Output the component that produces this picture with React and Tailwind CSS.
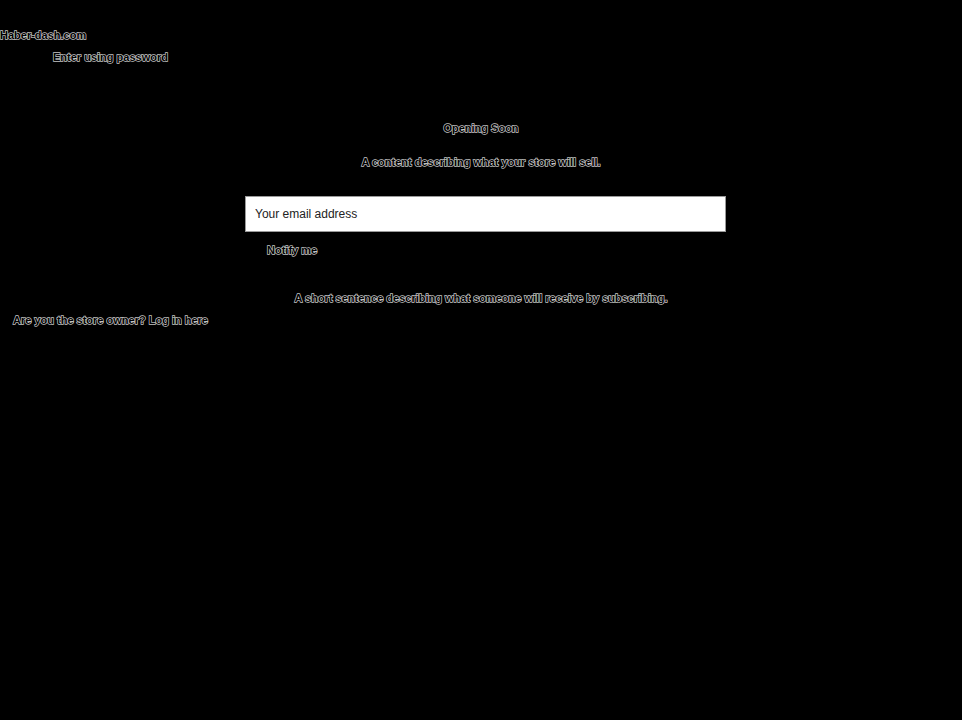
import React from "react";

const outline =
  "text-black font-bold text-[11px] [-webkit-text-stroke:1.4px_#c4c4c4] [paint-order:stroke_fill]";

export default function App() {
  return (
    <div className="min-h-[720px] w-full bg-black font-['Liberation_Sans',Arial,sans-serif]">
      {/* header */}
      <div className="pt-[28px]">
        <div className={outline + " leading-[14px]"}>Haber-dash.com</div>
        <div className={outline + " leading-[14px] mt-[8px] ml-[53px]"}>Enter using password</div>
      </div>

      {/* main */}
      <div className="flex flex-col items-center mt-[57px]">
        <h1 className={outline + " leading-[14px]"}>Opening Soon</h1>
        <p className={outline + " leading-[14px] mt-[20px]"}>
          A content describing what your store will sell.
        </p>
      </div>

      <form className="mt-[27px] ml-[245px] w-[481px]" onSubmit={(e) => e.preventDefault()}>
        <input
          type="email"
          placeholder="Your email address"
          className="w-full h-[36px] bg-white border border-[#9a9a9a] px-[9px] text-[12px] text-black placeholder:text-[#222] outline-none font-['Liberation_Sans',Arial,sans-serif]"
        />
        <button type="submit" className={outline + " leading-[14px] mt-[11px] ml-[22px] block"}>
          Notify me
        </button>
      </form>

      <p className={outline + " leading-[14px] mt-[34px] text-center"}>
        A short sentence describing what someone will receive by subscribing.
      </p>

      <div className={outline + " leading-[14px] mt-[8px] ml-[13px]"}>
        Are you the store owner? <a href="#">Log in here</a>
      </div>
    </div>
  );
}
